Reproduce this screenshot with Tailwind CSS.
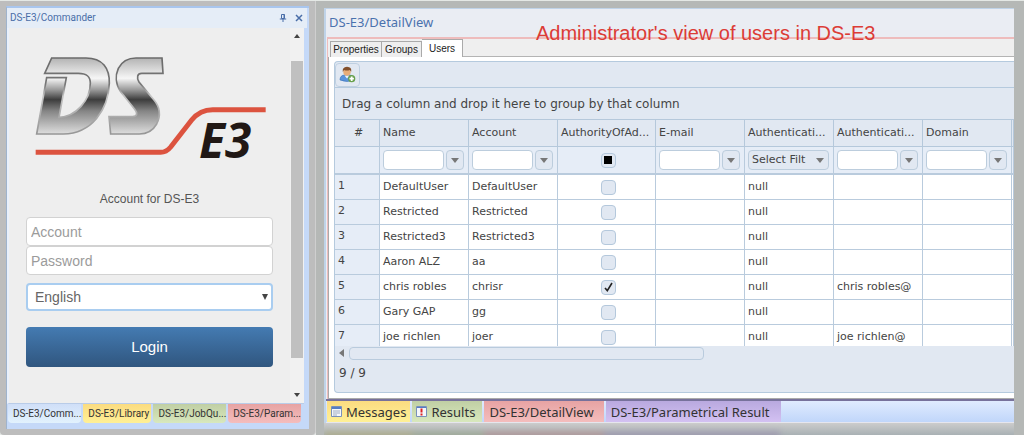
<!DOCTYPE html>
<html lang="en">
<head>
<meta charset="utf-8">
<meta name="viewport" content="width=device-width, initial-scale=1">
<title>DS-E3</title>
<script src="https://cdn.jsdelivr.net/npm/@tailwindcss/browser@4"></script>
</head>
<body class="flex h-screen overflow-hidden bg-[#e4e8e5] pt-px font-['Noto_Sans',sans-serif] text-[#444]">

<!-- Commander panel -->
<aside class="flex w-[316px] shrink-0 flex-col rounded-b border-r border-[#cfcfcf] bg-[#bdbdbd] px-[6px] pt-[5px] pb-[6px]">
  <div class="flex min-h-0 flex-1 flex-col border-t-2 border-l border-t-[#a9c6ee] border-l-[#9fb3cc] bg-[#c5d9f8] pb-[6px]">
    <header class="mr-[2px] flex h-5 shrink-0 items-center justify-between bg-[#e5edf7] pl-[3px] text-[#4a6ea8]">
      <h1 class="font-['Roboto',sans-serif] text-[10px] leading-5">DS-E3/Commander</h1>
      <div class="flex items-center">
        <button aria-label="Pin" class="grid h-4 w-4 place-items-center"><svg width="8" height="8" viewBox="0 0 8 8" fill="none" stroke="currentColor"><path d="M2.500 .5h3v4h-3zM.8 5h6.400M4 5v3M5 .5v4"/></svg></button>
        <button aria-label="Close" class="grid h-4 w-4 place-items-center"><svg width="8" height="8" viewBox="0 0 8 8" fill="none" stroke="currentColor" stroke-width="1.500"><path d="M1 1l6 6M7 1L1 7"/></svg></button>
      </div>
    </header>
    <div class="mr-[5px] flex min-h-0 flex-1 border-b border-l-2 border-b-[#b9cce8] border-l-[#e9f0fb] bg-[#eeeeee]">
      <main class="flex min-w-0 flex-1 flex-col px-[17px] pt-[22px]">
        <svg class="ml-1 h-[113px] w-[240px] shrink-0 overflow-visible" viewBox="90 150 720 339" role="img" aria-label="DS E3">
          <defs>
            <linearGradient id="metal" gradientUnits="userSpaceOnUse" x1="0" y1="173" x2="0" y2="402">
              <stop offset="0" stop-color="#b2b2b2"/><stop offset=".27" stop-color="#f6f6f6"/>
              <stop offset=".42" stop-color="#9a9a9a"/><stop offset=".55" stop-color="#3d3d3d"/>
              <stop offset=".7" stop-color="#858585"/><stop offset="1" stop-color="#dedede"/>
            </linearGradient>
            <linearGradient id="edge" gradientUnits="userSpaceOnUse" x1="0" y1="173" x2="0" y2="402">
              <stop offset="0" stop-color="#6a6a6a"/><stop offset=".35" stop-color="#777"/><stop offset=".5" stop-color="#c4c4c4"/><stop offset="1" stop-color="#969696"/>
            </linearGradient>
          </defs>
          <g fill="url(#metal)" stroke="url(#edge)" stroke-width="5">
            <path d="M155 174H258C308 174 329 205 328 250C325 330 275 400 190 402H110L140 233H199L177 352C228 350 271 300 271 250C271 230 262 220 235 220H134Z"/>
            <path d="M408 174H486L489 220H425C412 220 409 232 417 246L462 300C483 325 481 350 470 372C458 393 440 402 418 402H332L327 350H398C414 349 412 338 404 328L362 275C346 252 346 225 355 205C366 184 384 174 408 174Z"/>
          </g>
          <path d="M107 457H482C495 457 503 452 512 441L575 360Q600 329 638 329H797" fill="none" stroke="#dc533f" stroke-width="15"/>
          <text x="597" y="475" font-family="Noto Sans, sans-serif" font-size="143" font-weight="700" font-style="italic" fill="#211815">E3</text>
        </svg>
        <form class="mt-[27px] flex flex-col font-['Liberation_Sans',sans-serif]">
          <p class="mb-[9px] text-center text-[12px] leading-[18px] text-[#555]">Account for DS-E3</p>
          <input type="text" aria-label="Account" placeholder="Account" class="h-[29px] rounded border border-[#d2d2d2] bg-white px-1 text-[14px] placeholder:text-[#9b9b9b]">
          <input type="password" aria-label="Password" placeholder="Password" class="h-[29px] rounded border border-[#d2d2d2] bg-white px-1 text-[14px] placeholder:text-[#9b9b9b]">
          <div class="relative mt-2">
            <select aria-label="Language" class="h-7 w-full appearance-none rounded border-2 border-[#a9cdf0] bg-white px-[7px] text-[14px] text-[#666]"><option>English</option></select>
            <svg class="pointer-events-none absolute top-[11px] right-[5px]" width="6" height="6" viewBox="0 0 6 6"><path d="M0 0h6L3 6z" fill="#444"/></svg>
          </div>
          <button type="button" class="mt-4 h-10 rounded bg-linear-to-b from-[#447bb2] to-[#30567f] text-[15px] text-white">Login</button>
        </form>
      </main>
      <div class="flex w-[14px] shrink-0 flex-col items-center bg-[#f1f1f1] py-[6px]">
        <svg width="6" height="4" viewBox="0 0 6 4"><path d="M0 4h6L3 0z" fill="#444"/></svg>
        <div class="mt-[23px] mb-[35px] w-3 flex-1 bg-[#c0c0c0]"></div>
        <svg width="6" height="4" viewBox="0 0 6 4"><path d="M0 0h6L3 4z" fill="#444"/></svg>
      </div>
    </div>
    <nav class="flex h-[19px] shrink-0 gap-[2px] pr-2 pl-px font-['Roboto',sans-serif] text-[10px] leading-[19px] whitespace-nowrap text-[#333]">
      <a href="#commander" class="flex-1 rounded-b-sm bg-linear-to-b from-[#d0dff8] to-[#e2f2fd] pl-[5px]">DS-E3/Comm...</a>
      <a href="#library" class="flex-1 rounded-b-sm bg-linear-to-b from-[#fbdc80] to-[#fff096] pl-[5px]">DS-E3/Library</a>
      <a href="#jobqueue" class="flex-1 rounded-b-sm bg-linear-to-b from-[#c0cfa4] to-[#d8e8bd] pl-[5px]">DS-E3/JobQu...</a>
      <a href="#param" class="flex-1 rounded-b-sm bg-linear-to-b from-[#e7a3a3] to-[#f4bdbd] pl-[5px]">DS-E3/Param...</a>
    </nav>
  </div>
</aside>

<!-- Detail view -->
<section class="relative flex min-w-0 flex-1 flex-col bg-[#b5b8b6] pt-[7px] pr-[10px] pl-2">
  <p class="absolute top-[18px] left-[220px] font-['Liberation_Sans',sans-serif] text-[20px] leading-7 whitespace-nowrap text-[#dc3c36]">Administrator's view of users in DS-E3</p>
  <div class="flex min-h-0 flex-1 flex-col border-t border-l-2 border-[#bfd3e8] bg-[#eaedf3]">
    <h2 class="h-7 shrink-0 pl-[3px] text-[13px] leading-[27px] text-[#4a72ae]">DS-E3/DetailView</h2>
    <div class="ml-px flex min-h-0 flex-1 flex-col border-t-2 border-l border-[#eebcbc] bg-[#efefef]">
      <div role="tablist" class="flex h-[18px] shrink-0 items-end pl-[2px] font-['Liberation_Sans',sans-serif] text-[10px] text-[#222]">
        <button role="tab" class="h-4 w-[52px] border border-b-0 border-[#aaa] bg-[#eeeeee]">Properties</button>
        <button role="tab" class="h-4 w-10 border border-b-0 border-l-0 border-[#aaa] bg-[#eeeeee]">Groups</button>
        <button role="tab" aria-selected="true" class="h-[18px] w-[41px] border border-b-0 border-l-0 border-[#aaa] bg-white">Users</button>
        <div class="h-px flex-1 bg-[#b4b4b4]"></div>
      </div>
      <div class="flex min-h-0 flex-1 flex-col border-b border-l border-[#aaa] bg-white pt-1 pb-[5px] pl-[5px]">
        <div class="flex min-h-0 flex-1 flex-col overflow-hidden rounded-l border border-r-0 border-[#b5cade] bg-[#e1e8f2] font-['DejaVu_Sans',sans-serif] text-[11px]">
          <div class="flex h-[26px] shrink-0 items-center border-b border-[#b5cade]">
            <button aria-label="Add user" class="grid h-6 w-[25px] place-items-center rounded-sm border border-[#bfd0e1]">
              <svg width="17" height="17" viewBox="0 0 17 17">
                <path d="M1 14Q1 9 6 9h4q5 0 5 5-7 3-14 0z" fill="#5b94dc" stroke="#376fb5" stroke-width=".6"/>
                <path d="M5.500 9.500L8 12.500 10.500 9.500z" fill="#eef4fb"/>
                <circle cx="8" cy="6" r="3.700" fill="#e8ad78"/>
                <path d="M3.800 6Q3 1 8 .8q5 .2 4.200 5L10.800 4Q8 5.200 5 4z" fill="#83502b"/>
                <circle cx="12.700" cy="12.700" r="3.600" fill="#67a04c"/><path d="M12.700 10.500v4.400M10.500 12.700h4.400" stroke="#fff" stroke-width="1.800"/>
              </svg>
            </button>
          </div>
          <p class="h-[31px] shrink-0 pl-[7px] text-[12px] leading-8">Drag a column and drop it here to group by that column</p>
          <div class="min-h-0 flex-1 overflow-hidden">
            <table class="w-full table-fixed border-separate border-spacing-0 text-left [&_td]:border-r [&_td]:border-b [&_td]:border-[#b9cbdd] [&_td]:p-0 [&_td]:pl-[3px] [&_th]:truncate [&_th]:border-y [&_th]:border-r [&_th]:border-[#b5c8db] [&_th]:p-0 [&_th]:pl-[3px] [&_th]:font-normal [&_tbody_td]:bg-white [&_tbody_td]:leading-6 [&_tbody_td:first-child]:bg-[#e6edf7] [&_tbody_td:first-child]:pb-[2px] [&_tbody_td:first-child]:leading-[22px]">
              <colgroup><col class="w-[45px]"><col class="w-[89px]"><col class="w-[89px]"><col class="w-[98px]"><col class="w-[89px]"><col class="w-[89px]"><col class="w-[89px]"><col class="w-[89px]"><col></colgroup>
              <thead>
                <tr class="h-7"><th class="text-center">#</th><th>Name</th><th>Account</th><th>AuthorityOfAd...</th><th>E-mail</th><th>Authenticati...</th><th>Authenticati...</th><th>Domain</th><th></th></tr>
                <tr class="h-7 bg-[#e6edf7] [&>td]:border-b-2">
                  <td></td>
                  <td><div class="flex gap-[2px] pr-1"><input aria-label="Filter name" class="h-5 min-w-0 flex-1 rounded-sm border border-[#bccddd] bg-white px-1"><button aria-label="Name filter options" class="grid h-5 w-[18px] place-items-center rounded-sm border border-[#bccddd] bg-[#e1e8f2]"><svg width="8" height="5" viewBox="0 0 8 5"><path d="M0 0h8L4 5z" fill="#777"/></svg></button></div></td>
                  <td><div class="flex gap-[2px] pr-1"><input aria-label="Filter account" class="h-5 min-w-0 flex-1 rounded-sm border border-[#bccddd] bg-white px-1"><button aria-label="Account filter options" class="grid h-5 w-[18px] place-items-center rounded-sm border border-[#bccddd] bg-[#e1e8f2]"><svg width="8" height="5" viewBox="0 0 8 5"><path d="M0 0h8L4 5z" fill="#777"/></svg></button></div></td>
                  <td><label class="mx-auto grid w-[15px] place-items-center"><input type="checkbox" aria-label="Filter authority" class="col-start-1 row-start-1 h-[15px] w-[15px] appearance-none rounded-sm border border-[#b4c8dc] bg-[#e1e8f2]"><svg class="pointer-events-none col-start-1 row-start-1" width="8" height="8"><path d="M0 0h8v8H0z"/></svg></label></td>
                  <td><div class="flex gap-[2px] pr-1"><input aria-label="Filter e-mail" class="h-5 min-w-0 flex-1 rounded-sm border border-[#bccddd] bg-white px-1"><button aria-label="E-mail filter options" class="grid h-5 w-[18px] place-items-center rounded-sm border border-[#bccddd] bg-[#e1e8f2]"><svg width="8" height="5" viewBox="0 0 8 5"><path d="M0 0h8L4 5z" fill="#777"/></svg></button></div></td>
                  <td><div class="relative pr-1"><select aria-label="Filter authentication" class="block h-5 w-full appearance-none rounded-sm border border-[#bccddd] bg-[#e1e8f2] pr-5 pl-[3px]"><option>Select Filt</option></select><svg class="pointer-events-none absolute top-2 right-[9px]" width="8" height="5" viewBox="0 0 8 5"><path d="M0 0h8L4 5z" fill="#777"/></svg></div></td>
                  <td><div class="flex gap-[2px] pr-1"><input aria-label="Filter authentication name" class="h-5 min-w-0 flex-1 rounded-sm border border-[#bccddd] bg-white px-1"><button aria-label="Authentication filter options" class="grid h-5 w-[18px] place-items-center rounded-sm border border-[#bccddd] bg-[#e1e8f2]"><svg width="8" height="5" viewBox="0 0 8 5"><path d="M0 0h8L4 5z" fill="#777"/></svg></button></div></td>
                  <td><div class="flex gap-[2px] pr-1"><input aria-label="Filter domain" class="h-5 min-w-0 flex-1 rounded-sm border border-[#bccddd] bg-white px-1"><button aria-label="Domain filter options" class="grid h-5 w-[18px] place-items-center rounded-sm border border-[#bccddd] bg-[#e1e8f2]"><svg width="8" height="5" viewBox="0 0 8 5"><path d="M0 0h8L4 5z" fill="#777"/></svg></button></div></td>
                  <td></td>
                </tr>
              </thead>
              <tbody class="[&_input]:col-start-1 [&_input]:row-start-1 [&_input]:h-[15px] [&_input]:w-[15px] [&_input]:appearance-none [&_input]:rounded-sm [&_input]:border [&_input]:border-[#b4c8dc] [&_input]:bg-[#e1e8f2] [&_label]:mx-auto [&_label]:grid [&_label]:w-[15px] [&_label]:place-items-center">
                <tr><td>1</td><td>DefaultUser</td><td>DefaultUser</td><td><label><input type="checkbox" aria-label="DefaultUser authority"></label></td><td></td><td>null</td><td></td><td></td><td></td></tr>
                <tr><td>2</td><td>Restricted</td><td>Restricted</td><td><label><input type="checkbox" aria-label="Restricted authority"></label></td><td></td><td>null</td><td></td><td></td><td></td></tr>
                <tr><td>3</td><td>Restricted3</td><td>Restricted3</td><td><label><input type="checkbox" aria-label="Restricted3 authority"></label></td><td></td><td>null</td><td></td><td></td><td></td></tr>
                <tr><td>4</td><td>Aaron ALZ</td><td>aa</td><td><label><input type="checkbox" aria-label="Aaron ALZ authority"></label></td><td></td><td>null</td><td></td><td></td><td></td></tr>
                <tr><td>5</td><td>chris robles</td><td>chrisr</td><td><label><input type="checkbox" checked aria-label="chris robles authority"><svg class="pointer-events-none col-start-1 row-start-1" width="9" height="10" viewBox="0 0 9 10"><path d="M1 6l2.300 2.600L8 1" fill="none" stroke="#222" stroke-width="1.600"/></svg></label></td><td></td><td>null</td><td>chris robles@</td><td></td><td></td></tr>
                <tr><td>6</td><td>Gary GAP</td><td>gg</td><td><label><input type="checkbox" aria-label="Gary GAP authority"></label></td><td></td><td>null</td><td></td><td></td><td></td></tr>
                <tr><td>7</td><td>joe richlen</td><td>joer</td><td><label><input type="checkbox" aria-label="joe richlen authority"></label></td><td></td><td>null</td><td>joe richlen@</td><td></td><td></td></tr>
              </tbody>
            </table>
          </div>
          <div class="flex h-[14px] shrink-0 items-center gap-[5px] pl-1">
            <svg width="5" height="8" viewBox="0 0 5 8"><path d="M5 0v8L0 4z" fill="#777"/></svg>
            <div class="h-[13px] w-[355px] rounded-sm border border-[#b9cbdd]"></div>
          </div>
          <p class="h-8 shrink-0 pl-1 text-[12px] leading-[27px]">9 / 9</p>
        </div>
      </div>
    </div>
    <nav class="flex h-6 shrink-0 gap-[2px] border-t-2 border-b border-t-[#77719b] border-b-[#e6e6ee] bg-linear-to-b from-[#e0ebfe] to-[#c0d6fa] pl-px text-[13px] leading-[23px] text-[#333]">
      <a href="#messages" class="flex gap-1 bg-linear-to-b from-[#fbdc80] to-[#fff096] pr-1 pl-1">
        <svg class="self-center" width="11" height="11" viewBox="0 0 11 11"><path d="M.5.5h10v10H.5z" fill="#f5f7fb" stroke="#7990ba"/><path d="M1 1h9v2H1z" fill="#557dc4"/><path d="M2 5h7M2 7h7M2 9h4" stroke="#8a9bb8" stroke-width=".8"/></svg>Messages</a>
      <a href="#results" class="flex gap-1 bg-linear-to-b from-[#c0cfa4] to-[#d8e8bd] pr-[7px] pl-1">
        <svg class="self-center" width="11" height="11" viewBox="0 0 11 11"><path d="M.5.5h10v10H.5z" fill="#f5f7fb" stroke="#7990ba"/><path d="M1 1h9v1H1z" fill="#557dc4"/><path d="M5.500 2.500v4M5.500 7.500v2" stroke="#d22" stroke-width="2"/></svg>Results</a>
      <a href="#detail" class="bg-linear-to-b from-[#e7a3a3] to-[#f4bdbd] pr-[10px] pl-[5px]">DS-E3/DetailView</a>
      <a href="#parametrical" class="bg-linear-to-b from-[#b9a9df] to-[#d3c1f2] pr-3 pl-[5px]">DS-E3/Parametrical Result</a>
    </nav>
  </div>
  <!-- soft reflection of the tab bar -->
  <div class="h-3 shrink-0 overflow-hidden bg-linear-to-b from-[#cccccc] to-[#a9b1b4]">
    <div class="mt-2 flex h-2 opacity-50 blur-[3px]"><i class="w-[88px] bg-[#b3a968]"></i><i class="w-[72px] bg-[#97a47e]"></i><i class="w-[120px] bg-[#b57f7f]"></i><i class="w-[176px] bg-[#9284a8]"></i></div>
  </div>
</section>
</body>
</html>
